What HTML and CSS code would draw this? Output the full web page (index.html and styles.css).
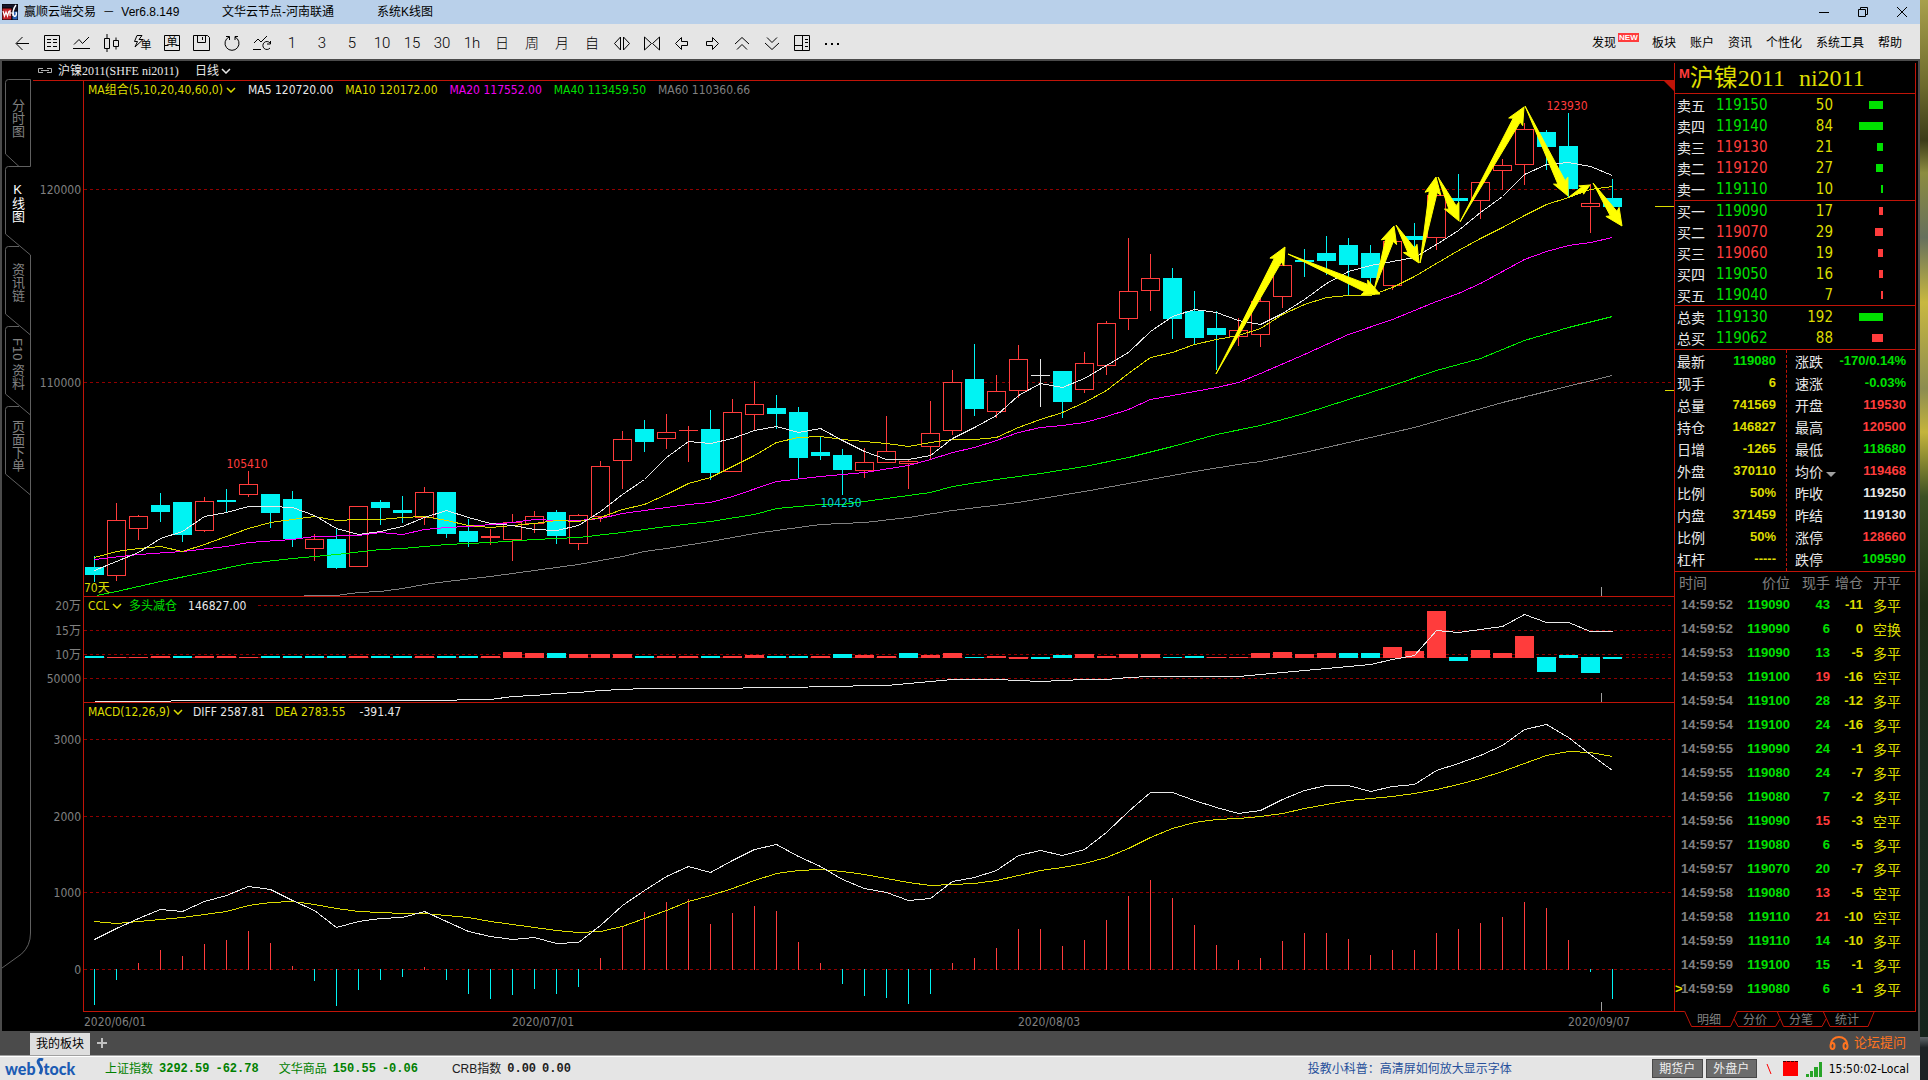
FILE: index.html
```html
<!DOCTYPE html>
<html lang="zh-CN">
<head>
<meta charset="utf-8">
<title>赢顺云端交易 - Ver6.8.149</title>
<link rel="stylesheet" href="styles.css">
</head>
<body>
<div class="window">
  <header class="titlebar">
    <svg class="app-icon" viewBox="0 0 16 16"><rect width="16" height="16" fill="#16162c"/><path d="M0 4h10v12H0z" fill="#c4242c"/><path d="M10 7h6v9h-6z" fill="#2a62b4"/><path d="M1 7l1.5 5L4 8l1.500 4L7 7M8 6v6M8 9h3v3" fill="none" stroke="#fff" stroke-width="1.2"/><path d="M14 1c-3 4-4 9-2 11 2 1 3-2 2-4" fill="none" stroke="#fff" stroke-width="1.400"/></svg>
    <span class="app-name">赢顺云端交易 &nbsp;－ &nbsp;Ver6.8.149</span>
    <span class="node-name">文华云节点-河南联通</span>
    <span class="view-name">系统K线图</span>
    <div class="win-controls">
      <button aria-label="最小化"><svg viewBox="0 0 12 12"><path d="M1 6.500H11"/></svg></button>
      <button aria-label="还原"><svg viewBox="0 0 12 12"><path d="M1.500 3.500h7v7h-7zM3.500 3V1.500h7v7H9"/></svg></button>
      <button aria-label="关闭"><svg viewBox="0 0 12 12"><path d="M1 1L11 11M11 1L1 11"/></svg></button>
    </div>
  </header>

  <div class="toolbar">
    <div class="tools">
      <button aria-label="返回"><svg viewBox="0 0 20 20"><path d="M4.500 10.500H17M10.500 4L4 10.500l6.500 6.500"/></svg></button>
      <button aria-label="报价"><svg viewBox="0 0 20 20"><path d="M2.500 2.500h15v15h-15zM5 6.500h4M11 6.500h4M5 9.500h4M11 9.500h4M5 13.500h4M11 13.500h4"/></svg></button>
      <button aria-label="分时"><svg viewBox="0 0 20 20"><path d="M1 15.500H18M2 11.500l5-5 3.500 4L17 4"/></svg></button>
      <button aria-label="K线"><svg viewBox="0 0 20 20"><path d="M2.500 5.500h5v10h-5zM5 1v4.500M5 15.500V19M11.500 7.500h5v6h-5zM14 4.500v3M14 13.500v3"/></svg></button>
      <button aria-label="闪电下单"><svg viewBox="0 0 20 20"><path d="M5 2.500h5l-3 4h4L3 14l2.500-5.500H2.500z"/></svg><span class="mark corner">单</span></button>
      <button aria-label="下单"><svg viewBox="0 0 20 20"><path d="M2.500 2.500h15v15h-15zM2.500 12.500h4M13.500 12.500h4"/></svg><span class="mark">单</span></button>
      <button aria-label="保存"><svg viewBox="0 0 20 20"><path d="M1.500 2.500h14l2 2v13h-16zM5.500 2.500v7h8v-7M10.500 4v3"/></svg></button>
      <button aria-label="刷新"><svg viewBox="0 0 20 20"><path d="M7 4A7 7 0 1 0 13 4M4 3.500h3.500V7M16 3.500h-3V7"/></svg></button>
      <button aria-label="切换"><svg viewBox="0 0 20 20"><path d="M2 10l4-4 3 3 6-6M1 16.500h8M18 10a4 4 0 1 0 0 5M18.500 8v3H15"/></svg></button>
      <button class="t">1</button><button class="t">3</button><button class="t">5</button><button class="t">10</button><button class="t">15</button><button class="t">30</button><button class="t">1h</button>
      <button class="c">日</button><button class="c">周</button><button class="c">月</button><button class="c">自</button>
      <button aria-label="放宽"><svg viewBox="0 0 20 20"><path d="M8.500 4L2.500 10.500l6 6.500zM11.500 4l6 6.500-6 6.500z"/></svg></button>
      <button aria-label="收窄"><svg viewBox="0 0 20 20"><path d="M2.500 4l7 6.500-7 6.500zM17.500 4l-7 6.500 7 6.500z"/></svg></button>
      <button aria-label="左移"><svg viewBox="0 0 20 20"><path d="M9.500 4.500L3.500 10.500l6 6v-4h6v-4h-6z"/></svg></button>
      <button aria-label="右移"><svg viewBox="0 0 20 20"><path d="M10.500 4.500l6 6-6 6v-4h-6v-4h6z"/></svg></button>
      <button aria-label="上"><svg viewBox="0 0 20 20"><path d="M3 11l7-6.500 7 6.500M5 16.500l5-5 5 5"/></svg></button>
      <button aria-label="下"><svg viewBox="0 0 20 20"><path d="M3 10l7 6.500 7-6.500M5 4.500l5 5 5-5"/></svg></button>
      <button aria-label="布局"><svg viewBox="0 0 20 20"><path d="M2.500 2.500h15v15h-15zM10.500 2.500v15M2.500 12.500h8M13 6.500h3M13 9.500h3M13 13.500h3"/></svg></button>
      <button aria-label="更多"><svg viewBox="0 0 20 20"><path d="M3 10h2v2H3zM9 10h2v2H9zM15 10h2v2h-2z" fill="#000" stroke="none"/></svg></button>
    </div>
    <nav class="menu">
      <a href="#" class="has-badge">发现<span class="badge">NEW</span></a><a href="#">板块</a><a href="#">账户</a><a href="#">资讯</a><a href="#">个性化</a><a href="#">系统工具</a><a href="#">帮助</a>
    </nav>
  </div>

  <main class="main">
    <nav class="side">
      <svg class="side-lines" viewBox="2 61 31 909"><path d="M30.500 79.500H8.500q-3 0-3 3V154L19 166.500M30.500 79.500V166.500H8.500q-3 0-3 3V234L30.500 255M19 246.500H8.500q-3 0-3 3V314L30.500 335M19 326.500H8.500q-3 0-3 3V394L30.500 415M19 406.500H8.500q-3 0-3 3V474L30.500 495M30.500 255V933q0 13-9 21L2 968"/></svg>
      <button class="first">分时图</button>
      <button class="on">K线图</button>
      <button>资讯链</button>
      <button class="mixed">F10 资料</button>
      <button class="last">页面下单</button>
    </nav>

    <section class="chart">
      <div class="chart-head">
        <svg class="chain" viewBox="0 0 16 8"><path d="M6 1.500H1.500v4H6M4 3.500h8M10 1.500h4.500v4H10"/></svg>
        <span class="serif">沪镍2011(SHFE ni2011)</span>
        <button class="period">日线<svg class="chev" viewBox="0 0 10 6"><path d="M1 1l4 4 4-4"/></svg></button>
      </div>
      <div class="pane price">
        <div class="axis" id="axis-price"></div>
        <div class="plot" id="plot-price">
          <svg class="canvas" id="price" viewBox="84 81 1590 515" preserveAspectRatio="none"></svg>
          <div class="legend"><button class="y">MA组合(5,10,20,40,60,0)<svg class="chev" viewBox="0 0 10 6"><path d="M1 1l4 4 4-4"/></svg></button><span class="w">MA5 120720.00</span><span class="y">MA10 120172.00</span><span class="m">MA20 117552.00</span><span class="g">MA40 113459.50</span><span class="n">MA60 110360.66</span></div>
          <span class="days">70天</span>
        </div>
      </div>
      <div class="pane ccl">
        <div class="axis" id="axis-ccl"></div>
        <div class="plot">
          <svg class="canvas" id="ccl" viewBox="84 597 1590 105" preserveAspectRatio="none"></svg>
          <div class="legend"><button class="y">CCL<svg class="chev" viewBox="0 0 10 6"><path d="M1 1l4 4 4-4"/></svg></button><span class="g">多头减仓</span><span class="w far">146827.00</span></div>
        </div>
      </div>
      <div class="pane macd">
        <div class="axis" id="axis-macd"></div>
        <div class="plot">
          <svg class="canvas" id="macd" viewBox="84 703 1590 308" preserveAspectRatio="none"></svg>
          <div class="legend"><button class="y">MACD(12,26,9)<svg class="chev" viewBox="0 0 10 6"><path d="M1 1l4 4 4-4"/></svg></button><span class="w">DIFF 2587.81</span><span class="y">DEA 2783.55</span><span class="w far">-391.47</span></div>
        </div>
      </div>
      <div class="dates" id="dates"></div>
    </section>

    <aside class="quote">
      <div class="quote-box">
        <h1 class="symbol"><sup>M</sup><span>沪镍2011</span><span>ni2011</span></h1>
        <table class="book sell" id="sell"></table>
        <table class="book buy" id="buy"></table>
        <table class="book total" id="total"></table>
        <div class="stats">
          <dl>
            <div><dt>最新</dt><dd class="g">119080</dd></div>
            <div><dt>现手</dt><dd class="y">6</dd></div>
            <div><dt>总量</dt><dd class="y">741569</dd></div>
            <div><dt>持仓</dt><dd class="y">146827</dd></div>
            <div><dt>日增</dt><dd class="y">-1265</dd></div>
            <div><dt>外盘</dt><dd class="y">370110</dd></div>
            <div><dt>比例</dt><dd class="y">50%</dd></div>
            <div><dt>内盘</dt><dd class="y">371459</dd></div>
            <div><dt>比例</dt><dd class="y">50%</dd></div>
            <div><dt>杠杆</dt><dd class="y">-----</dd></div>
          </dl>
          <dl>
            <div><dt>涨跌</dt><dd class="g">-170/0.14%</dd></div>
            <div><dt>速涨</dt><dd class="g">-0.03%</dd></div>
            <div><dt>开盘</dt><dd class="r">119530</dd></div>
            <div><dt>最高</dt><dd class="r">120500</dd></div>
            <div><dt>最低</dt><dd class="g">118680</dd></div>
            <div><dt class="drop">均价</dt><dd class="r">119468</dd></div>
            <div><dt>昨收</dt><dd class="w">119250</dd></div>
            <div><dt>昨结</dt><dd class="w">119130</dd></div>
            <div><dt>涨停</dt><dd class="r">128660</dd></div>
            <div><dt>跌停</dt><dd class="g">109590</dd></div>
          </dl>
        </div>
        <table class="ticks">
          <thead><tr><th>时间</th><th>价位</th><th>现手</th><th>增仓</th><th>开平</th></tr></thead>
          <tbody id="ticks"></tbody>
        </table>
      </div>
      <nav class="quote-tabs">
        <svg viewBox="0 0 242 19"><path d="M10 0h54v2H10z" fill="#000" stroke="none"/><path d="M10.500 0L17.500 15.500H56.500L63.500 0M60 8l4 7.500H101.500L106 8M103 0l6.500 15.500H148L152 8M149 0l7 15.500H194L200.500 0"/></svg>
        <button>明细</button><button>分价</button><button>分笔</button><button>统计</button>
      </nav>
    </aside>
  </main>

  <div class="boards">
    <button class="board">我的板块</button>
    <button class="add" aria-label="新增"><svg viewBox="0 0 10 10"><path d="M5 0v10M0 5h10"/></svg></button>
    <a href="#" class="forum"><svg viewBox="0 0 20 14"><path d="M2 9V8a8 7 0 0 1 16 0v1"/><ellipse cx="3.500" cy="10" rx="2" ry="3"/><ellipse cx="16.500" cy="10" rx="2" ry="3"/></svg>论坛提问</a>
  </div>

  <footer class="status">
    <span class="logo">web<svg viewBox="0 0 8 18"><path d="M7 2C3 0 1 3 3 6s4 5 1 10"/></svg>tock</span>
    <div class="indices">
      <span class="idx up"><span>上证指数</span><b>3292.59</b><b>-62.78</b></span>
      <span class="idx up"><span>文华商品</span><b>150.55</b><b>-0.06</b></span>
      <span class="idx crb"><span>CRB指数</span><b>0.00</b><b>0.00</b></span>
    </div>
    <a href="#" class="notice">投教小科普：高清屏如何放大显示字体</a>
    <div class="accounts">
      <button>期货户</button><button>外盘户</button>
      <svg class="slash" viewBox="0 0 6 12"><path d="M1 1l4 10"/></svg>
      <span class="block"></span>
      <svg class="signal" viewBox="0 0 16 16"><path d="M0 13h3v3H0zM4 10h3v6H4zM8 6h4v10H8zM13 1h3v15h-3z"/></svg>
      <span class="clock">15:50:02-Local</span>
    </div>
  </footer>
</div>
<script src="chart.js"></script>
</body>
</html>
```
FILE: styles.css
```css
* { box-sizing: border-box; }
:root {
  --red: #ff3c3c;
  --cyan: #00f3f3;
  --line: #c01408;
  --tahoma: "DejaVu Sans Condensed", "DejaVu Sans", "Noto Sans CJK SC", sans-serif;
  --figures: "Liberation Sans", "Noto Sans CJK SC", sans-serif;
}
html, body { margin: 0; height: 100%; }
body {
  font: 12px/16px "Liberation Sans", "Noto Sans CJK SC", sans-serif;
  color: #000;
  padding-right: 8px;
  background: linear-gradient(#a8a04c 0, #6c6a2c 8%, #3c3c18 13%, #8c8c40 16%, #66705c 22%, #c8b840 28%, #8c8c50 36%, #c4b43c 40%, #3c5024 46%, #1c2a12 56%, #18281c 70%, #14241c 96%, #60686c 96%, #1d2326 97%);
}
button { font: inherit; color: inherit; background: none; border: 0; padding: 0; margin: 0; }
a { color: inherit; text-decoration: none; }
table { border-collapse: collapse; border-spacing: 0; }
svg { display: block; fill: none; stroke: currentColor; flex: none; }

.y { color: #dcdc00; }
.w { color: #e8e8e8; }
.m { color: #f000f0; }
.g { color: #00e000; }
.n { color: #808080; }
.r { color: var(--red); }

.window { display: flex; flex-direction: column; height: 100vh; }

.titlebar { display: flex; align-items: center; height: 24px; background: #b9d0ea; padding-left: 2px; flex: none; }
.app-icon { width: 16px; height: 16px; margin-right: 6px; }
.app-name { width: 198px; }
.node-name { width: 155px; }
.win-controls { margin-left: auto; display: flex; gap: 3px; }
.win-controls button { width: 36px; height: 24px; display: grid; place-items: center; }
.win-controls svg { width: 12px; height: 12px; }

.toolbar { display: flex; justify-content: space-between; align-items: center; height: 37px; background: #e5e5e5; border-bottom: 2px solid #4b4b4b; padding: 2px 18px 0 7px; flex: none; }
.tools { display: flex; }
.tools button { width: 30px; height: 30px; display: grid; place-items: center; position: relative; }
.tools svg { width: 20px; height: 20px; }
.tools .t { font: 300 15px/20px Roboto, sans-serif; }
.tools .c { font-size: 14px; line-height: 20px; font-weight: 300; }
.mark { position: absolute; inset: 0; display: grid; place-items: center; font-size: 11px; line-height: 11px; }
.mark.corner { padding: 6px 0 0 8px; }
.menu { display: flex; gap: 14px; }
.has-badge { position: relative; margin-right: 22px; }
.badge { position: absolute; left: 26px; top: -2px; width: 21px; height: 9px; background: var(--red); color: #fff; font: bold 8px/9px "Liberation Sans", sans-serif; text-align: center; }

.main { flex: 1; min-height: 0; display: flex; background: #000; border: solid #4b4b4b; border-width: 0 2px; padding-right: 2px; color: #e8e8e8; }
.side { width: 31px; position: relative; padding-top: 18px; flex: none; }
.side-lines { position: absolute; left: 0; top: 0; width: 31px; height: 909px; color: #606060; }
.side button { position: relative; display: block; width: 31px; height: 80px; padding-bottom: 8px; color: #808080; font-size: 13px; line-height: 31px; writing-mode: vertical-rl; text-orientation: upright; text-align: center; }
.side .first { height: 87px; padding-bottom: 8px; }
.side .on { color: #fff; }
.side .mixed { text-orientation: mixed; padding-bottom: 4px; }
.side .last { padding-bottom: 0; }

.chart { flex: 1; min-width: 0; display: flex; flex-direction: column; }
.chart-head { height: 19px; display: flex; align-items: center; padding-left: 4px; flex: none; }
.chain { width: 16px; height: 8px; margin-right: 5px; color: #b0b0b0; }
.serif { font-family: "Liberation Serif", "Noto Sans CJK SC", serif; width: 137px; }
.period { display: flex; align-items: center; gap: 2px; }
.chev { width: 10px; height: 6px; stroke-width: 1.5; }
.pane { display: flex; min-height: 0; font: 12px/16px var(--tahoma); }
.price { flex: 516 1 0; }
.ccl { flex: 106 1 0; }
.macd { flex: 310 1 0; }
.axis { width: 50px; position: relative; color: #808080; flex: none; }
.axis span { position: absolute; right: 2px; margin-top: -7px; }
.plot { flex: 1; min-width: 0; position: relative; border: solid var(--line); border-width: 1px 0 0 1px; }
.price .axis { border-top: 1px solid var(--line); }
.macd .plot { border-bottom-width: 1px; }
.canvas { width: 100%; height: 100%; }
.legend { position: absolute; left: 0; top: 0; display: flex; align-items: center; gap: 12px; height: 18px; padding: 0 9px 0 4px; background: #000; white-space: nowrap; }
.ccl .legend { gap: 7px; }
.macd .legend { gap: 10px; }
.legend button { display: flex; align-items: center; gap: 3px; }
.far { margin-left: 4px; }
.days { position: absolute; left: 0; bottom: 0; color: #dcdc00; }
.peak { position: absolute; width: 60px; margin: -7px 0 0 -30px; text-align: center; }
.low { color: #00d0d8; }
.dates { height: 19px; position: relative; margin-left: 51px; font: 12px/18px var(--tahoma); color: #808080; flex: none; }
.dates span { position: absolute; top: 1px; }

.quote { width: 242px; display: flex; flex-direction: column; padding-top: 2px; flex: none; }
.quote-box { flex: 1; min-height: 0; border: solid var(--line); border-width: 0 1px 1px; }
.symbol { margin: 0; height: 31px; border-bottom: 1px solid var(--line); padding-left: 4px; display: flex; align-items: center; font: 24px/30px "Liberation Serif", "Noto Sans CJK SC", serif; color: #dcdc00; }
.symbol sup { font: bold 13px/13px var(--figures); color: var(--red); align-self: flex-start; margin-top: 4px; }
.symbol span + span { margin-left: 14px; }
.book { width: 100%; table-layout: fixed; border-bottom: 1px solid var(--line); font: 15px/20px var(--tahoma); }
.book td, .book th { padding: 0; }
.book th { width: 41px; padding-left: 2px; text-align: left; font: 14px/20px "Noto Sans CJK SC", sans-serif; color: #e8e8e8; }
.book td:nth-child(2) { width: 56px; }
.book td:nth-child(3) { width: 61px; text-align: right; color: #dcdc00; }
.book td:nth-child(4) { padding-right: 32px; }
.bar { display: block; height: 8px; margin-left: auto; }
.sell { height: 107px; }
.buy { height: 105px; }
.total { height: 44px; }
.stats { display: flex; height: 222px; border-bottom: 1px solid var(--line); }
.stats dl { margin: 0; flex: 1; padding: 0 10px 0 2px; }
.stats dl + dl { border-left: 1px dashed var(--line); padding: 0 9px 0 8px; flex: none; width: 129px; }
.stats dl div { display: flex; justify-content: space-between; height: 22px; }
.stats dt { font: 14px/22px "Noto Sans CJK SC", sans-serif; color: #e8e8e8; }
.drop::after { content: ""; display: inline-block; margin-left: 3px; border: 5px solid transparent; border-top-color: #a0a0a0; border-bottom: 0; }
.stats dd { margin: 0; font: bold 13px/22px var(--figures); }
.ticks { width: 100%; table-layout: fixed; font: bold 13px/24px var(--figures); }
.ticks th, .ticks td { padding: 0; height: 24px; text-align: right; }
.ticks th { height: 21px; font: 14px/21px "Noto Sans CJK SC", sans-serif; color: #808080; }
.ticks th:nth-child(1) { width: 64px; padding-left: 4px; }
.ticks th:nth-child(2) { width: 51px; }
.ticks th:nth-child(3) { width: 40px; }
.ticks th:nth-child(4) { width: 33px; }
.ticks tr > :first-child { text-align: left; color: #808080; }
.ticks td:first-child { padding-left: 6px; position: relative; }
.ticks tr > :last-child { text-align: left; padding-left: 10px; }
.ticks td:last-child { font: 14px/24px "Noto Sans CJK SC", sans-serif; color: #dcdc00; }
.ticks tr:last-child td:first-child::before { content: ">"; position: absolute; left: 0; color: #dcdc00; }
.quote-tabs { height: 20px; margin-top: -1px; position: relative; display: flex; padding-left: 12px; color: #808080; }
.quote-tabs svg { position: absolute; left: 0; top: 0; width: 242px; height: 19px; color: var(--line); }
.quote-tabs button { position: relative; width: 46px; height: 17px; }

.boards { display: flex; align-items: center; height: 24px; background: #4b4b4b; padding-left: 30px; flex: none; }
.board { width: 60px; height: 22px; margin-top: 2px; background: #dedede; }
.add { margin-left: 7px; color: #c0c0c0; }
.add svg { width: 10px; height: 10px; stroke-width: 2; }
.forum { margin-left: auto; padding-right: 14px; display: flex; align-items: center; gap: 5px; color: #ff7420; font-size: 13px; }
.forum svg { width: 20px; height: 14px; stroke-width: 2; }

.status { display: flex; align-items: center; height: 25px; background: #e5e5e5; border-top: 1px solid #a0a0a0; box-shadow: inset 0 1px #fff; padding: 1px 11px 0 5px; flex: none; }
.logo { display: flex; align-items: center; width: 100px; font: 900 16px/20px Lato, sans-serif; color: #1c5cb4; }
.logo svg { width: 8px; height: 18px; stroke-width: 3; margin-top: -4px; }
.indices { display: flex; gap: 20px; flex: 1; }
.idx { display: flex; gap: 6px; white-space: nowrap; }
.idx b { font: bold 12px/16px "Liberation Mono", monospace; }
.up { color: #008000; }
.crb { margin-left: 14px; color: #202020; }
.notice { color: #27509b; margin-right: 140px; white-space: nowrap; }
.accounts { display: flex; align-items: center; }
.accounts button { width: 51px; height: 19px; margin-right: 3px; background: #6c6c6c; border: 1px solid #484848; color: #f0f0f0; }
.slash { width: 6px; height: 12px; margin: 0 11px 0 6px; color: #f00; }
.block { width: 15px; height: 15px; background: #f00; border-top: 1px dashed #400; margin-right: 8px; }
.signal { width: 16px; height: 16px; fill: #28a428; stroke: none; margin-right: 7px; }
.clock { font: 12px/16px var(--tahoma); }
```
FILE: chart.js
```js
const RED = '#ff3c3c', CYAN = '#00f3f3', WHITE = '#e8e8e8', YELLOW = '#dcdc00';
const X0 = 94, STEP = 22;
const px = i => X0 + STEP * i;

// kind, high, body top, body bottom, low
const candles = `c 556 567 575 582|r 503 520 575 580|r 515 516 528 539|c 493 505 512 522|c 502 502 535 542|r 497 501 530 531|c 489 500 502 513|r 471 484 494 496|c 494 494 513 528|c 491 499 539 547|r 534 539 548 560|c 528 539 568 569|r 506 506 566 566|c 500 502 508 525|c 496 510 513 523|r 487 492 517 524|c 492 492 534 538|c 519 531 542 547|r 529 536 537 544|r 514 522 539 560|r 511 516 523 532|c 510 512 536 544|r 514 515 543 549|r 461 466 516 521|r 431 439 460 488|c 420 429 442 452|r 414 432 438 448|r 426 430 430 461|c 410 429 473 480|r 399 412 471 471|r 381 404 414 429|c 395 408 414 429|c 407 412 458 478|c 436 452 456 460|c 449 455 470 495|r 448 462 470 477|r 416 451 462 462|r 459 461 463 488|r 401 433 446 458|r 370 382 430 434|c 344 379 409 416|r 375 391 411 417|r 345 359 390 397|w 359 375 375 406|c 371 371 402 418|r 352 363 389 392|r 321 323 365 374|r 238 291 318 329|r 254 278 290 310|c 268 278 319 339|c 291 311 338 345|c 311 328 335 370|r 318 330 336 345|r 297 301 334 346|r 263 265 296 307|c 249 260 262 277|c 236 253 261 275|c 238 245 265 295|c 245 253 278 287|r 237 241 285 289|c 223 236 240 250|r 195 195 237 249|c 174 198 201 213|r 182 182 200 218|r 159 165 170 189|r 123 129 164 184|c 130 132 147 170|c 113 146 189 197|r 184 203 206 232|c 179 198 207 208`
  .split('|').map(s => { const [k, ...v] = s.split(' '); return [k, ...v.map(Number)]; });

const nums = s => s.trim().split(/\s+/).map((v, i) => [px(i), +v]);
const pairs = s => s.trim().split(/\s+/).map(p => { const [i, y] = p.split(':').map(Number); return [px(i), y]; });

const ma5 = nums('570 561 552 538 531 516 512 506 506 507 515 528 534 531 526 517 510 517 523 525 529 530 525 511 494 479 457 441 443 438 430 426 432 428 440 451 459 459 455 438 427 415 395 383 387 378 365 352 331 316 309 312 320 324 313 299 283 271 265 261 257 244 230 212 196 174 164 162 166 175');
const ma10 = nums('557 551 548 546 551 544 536 528 522 519 516 520 519 519 517 516 520 525 527 525 523 520 521 517 509 504 494 483 477 466 455 442 437 436 439 441 443 446 442 439 439 437 427 419 412 402 390 373 357 352 344 339 335 328 314 304 297 295 295 287 276 263 250 238 227 215 204 197 189 186');
const ma20 = pairs('0:559 2:554 4:551 6:546 7:542 9:539 10:536 12:535 13:532 14:534 15:529 16:527 17:526 18:524 19:522 20:519 21:520 22:520 23:518 24:513 25:510 27:504 28:502 29:496 31:481 33:476 35:472 37:465 38:459 39:452 40:447 41:440 42:432 43:427 44:425 45:422 46:416 47:409 48:399 50:391 51:387 52:382 53:373 55:354 57:334 59:319 61:301 62:293 63:283 65:259 66:251 67:245 68:242 69:237');
const ma40 = pairs('0.1:595 1:591 3:581 5:572 7:563 9:558 11:554 13:549 14:548 16:544 18:542 20:539 22:537 24:532 26:526 28:521 30:514 31:508 33:504 34:504 36:498 38:492 39:486 41:479 43:473 45:466 47:457 49:446 51:434 53:425 55:413 57:399 59:385 61:370 63:358 65:340 67:327 69:316');
const ma60 = pairs('9.5:595 11:595 12:592 13:591 14:588 15:584 16:581 18:576 20:570 22:564 24:556 25:551 26:548 28:541 30:533 32:527 33:524 35:522 37:517 39:510 42:502 45:491 48:479 50:471 52:464 53:461 55:452 57:442 60:427 64:402 66:391 69:375');
const diff = nums('939 928 918 909 911 901 895 886 889 900 910 927 921 918 917 911 921 931 936 939 937 943 942 925 905 890 876 866 872 860 849 844 856 866 879 888 892 900 898 881 877 870 855 850 855 849 832 811 792 792 800 807 813 810 799 790 785 785 791 786 784 770 763 755 745 729 724 737 754 770');
const dea = nums('921 923 921 919 917 914 911 905 902 901 904 908 911 912 913 913 915 917 921 924 927 930 932 931 926 918 910 901 895 888 880 873 870 869 871 874 878 882 885 884 883 880 875 870 867 863 857 848 837 828 822 819 818 816 813 808 804 800 798 796 793 789 784 778 771 763 755 751 752 756');
const hist = '1005 980 963 950 956 944 940 931 943 966 981 1006 990 980 977 967 980 994 999 995 989 994 987 958 927 912 902 899 924 913 906 911 942 963 984 996 998 1004 994 963 958 948 929 929 946 940 920 896 880 898 925 945 960 958 941 933 933 939 955 950 950 933 929 923 917 902 908 940 972 999'.split(' ').map(Number);
const openInterest = pairs('0:701 3:701 4:700 16:700 17:699 18:699 19:696 20:695 21:693 22:692 23:690 24:689 25:688 28:688 31:687 34:686 35:685 36:685 37:683 38:681 39:679 41:679 43:681 45:679 46:679 47:677 48:676 52:676 53:674 54:672 55:670 56:668 57:666 58:664 59:659 60:655 61:630 62:632 63:629 64:626 65:614 66:622 67:622 68:631 69:631');
const flows = 'c2 r1 r1 r2 c2 r2 r2 r1 c2 c2 c2 c2 r2 c2 c2 r2 c2 c2 r2 r6 r5 c5 r4 r4 r4 c2 r2 r2 c2 r2 r3 c2 c2 r2 c4 r3 r2 c5 r3 r5 c1 r2 r-2 c-2 c3 r4 r2 r4 r4 c1 c2 r1 r1 r5 r6 r4 r5 c5 c5 r11 r7 r47 c-4 r8 r5 r22 c-15 c3 c-16 c-2'.split(' ');

const rect = (x, y, w, h, fill) => `<rect x="${x}" y="${y}" width="${w}" height="${h}" fill="${fill}" stroke="none"/>`;
const grid = ys => ys.map(y => `<path d="M84 ${y + .5}H1674" stroke="#900000" stroke-dasharray="3 3"/>`).join('');
const line = (pts, color) => `<polyline points="${pts.map(([x, y]) => `${x + .5},${y + .5}`).join(' ')}" stroke="${color}"/>`;
const crisp = body => `<g shape-rendering="crispEdges">${body}</g>`;
const tick = y => rect(1601, y, 1, 9, '#a0a0a0');

function candle([kind, high, top, bottom, low], i) {
  const x = px(i);
  if (kind === 'c') return rect(x, high, 1, low - high, CYAN) + rect(x - 9, top, 19, bottom - top, CYAN);
  const color = kind === 'w' ? WHITE : RED;
  return rect(x, high, 1, low - high + 1, color) +
    (top === bottom ? rect(x - 9, top, 19, 1, color)
      : `<rect x="${x - 8.5}" y="${top + .5}" width="18" height="${bottom - top}" fill="#000" stroke="${color}"/>`);
}

function arrow([x1, y1, x2, y2, size]) {
  const len = Math.hypot(x2 - x1, y2 - y1), ux = (x2 - x1) / len, uy = (y2 - y1) / len;
  const at = (back, side) => `${(x2 - ux * back - uy * side).toFixed(1)},${(y2 - uy * back + ux * side).toFixed(1)}`;
  const h = 17 * size, w = 8 * size, s = 4 * size;
  return `<polygon points="${x1},${y1} ${at(h - 2, s)} ${at(h, w)} ${x2},${y2} ${at(h, -w)} ${at(h - 2, -s)}" fill="#ff0" stroke="#ff0"/>`;
}
const arrows = [[1216, 374, 1285, 247, 1], [1288, 254, 1380, 294, 1], [1374, 290, 1394, 226, 1], [1396, 225, 1419, 263, 1], [1420, 263, 1436, 177, 1], [1438, 177, 1459, 221, 1], [1460, 222, 1524, 107, 1], [1525, 106, 1568, 196, 1], [1569, 197, 1590, 185, .6], [1593, 183, 1622, 226, 1]];

document.getElementById('price').innerHTML = crisp(
  grid([189, 382]) + candles.map(candle).join('') +
  line(ma60, '#808080') + line(ma40, '#00f000') + line(ma20, '#ff00ff') + line(ma10, YELLOW) + line(ma5, WHITE) +
  rect(1655, 206, 19, 1, YELLOW) + rect(1665, 390, 9, 1, YELLOW) + tick(587)
) + arrows.map(arrow).join('') + '<path d="M1664 81h10v10z" fill="#c01408" stroke="none"/>';

document.getElementById('ccl').innerHTML = crisp(
  grid([605, 630, 654, 657, 678]) + flows.map((f, i) => {
    const v = +f.slice(1), color = f[0] === 'c' ? CYAN : RED;
    return v > 0 ? rect(px(i) - 9, 658 - v, 19, v, color) : rect(px(i) - 9, 657, 19, -v, color);
  }).join('') + line(openInterest, WHITE) + tick(693));

document.getElementById('macd').innerHTML = crisp(
  grid([739, 816, 892, 969]) +
  hist.map((y, i) => y < 969 ? rect(px(i), y, 1, 970 - y, RED) : rect(px(i), 969, 1, y - 969, CYAN)).join('') +
  line(dea, YELLOW) + line(diff, WHITE) + tick(1002));

const place = (id, top, height, labels) => {
  document.getElementById(id).innerHTML = labels.map(([t, y]) => `<span style="top:${(y - top) / height * 100}%">${t}</span>`).join('');
};
place('axis-price', 81, 515, [['120000', 189], ['110000', 382]]);
place('axis-ccl', 596, 106, [['20万', 605], ['15万', 630], ['10万', 654], ['50000', 678]]);
place('axis-macd', 702, 310, [['3000', 739], ['2000', 816], ['1000', 892], ['0', 969]]);

document.getElementById('plot-price').insertAdjacentHTML('beforeend',
  [['105410', 247, 463, 'r'], ['104250', 841, 502, 'low'], ['123930', 1567, 105, 'r']].map(([t, x, y, c]) =>
    `<span class="peak ${c}" style="left:${(x - 84) / 15.9}%;top:${(y - 81) / 5.15}%">${t}</span>`).join(''));
document.getElementById('dates').innerHTML =
  [['2020/06/01', 84], ['2020/07/01', 512], ['2020/08/03', 1018], ['2020/09/07', 1568]].map(([t, x]) => `<span style="left:${(x - 84) / 15.9}%">${t}</span>`).join('');

const book = (id, color, rows) => {
  document.getElementById(id).innerHTML = '<tbody>' + rows.map(([n, p, c, q, w]) =>
    `<tr><th scope="row">${n}</th><td class="${c}">${p}</td><td>${q}</td><td><i class="bar" style="width:${w}px;background:${color}"></i></td></tr>`).join('') + '</tbody>';
};
book('sell', '#00e000', [['卖五', 119150, 'g', 50, 14], ['卖四', 119140, 'g', 84, 24], ['卖三', 119130, 'r', 21, 6], ['卖二', 119120, 'r', 27, 7], ['卖一', 119110, 'g', 10, 2]]);
book('buy', RED, [['买一', 119090, 'g', 17, 4], ['买二', 119070, 'r', 29, 8], ['买三', 119060, 'r', 19, 5], ['买四', 119050, 'g', 16, 4], ['买五', 119040, 'g', 7, 2]]);
book('total', '#00e000', [['总卖', 119130, 'g', 192, 24], ['总买', 119062, 'g', 88, 11]]);
document.querySelector('#total tr:last-child .bar').style.background = RED;

document.getElementById('ticks').innerHTML = `52 119090 43 -11 多平|52 119090 6 0 空换|53 119090 13 -5 多平|53 119100 19r -16 空平|54 119100 28 -12 多平|54 119100 24 -16 多平|55 119090 24 -1 多平|55 119080 24 -7 多平|56 119080 7 -2 多平|56 119090 15r -3 空平|57 119080 6 -5 多平|57 119070 20 -7 多平|58 119080 13r -5 空平|58 119110 21r -10 空平|59 119110 14 -10 多平|59 119100 15 -1 多平|59 119080 6 -1 多平`
  .split('|').map(s => s.split(' ')).map(([t, p, q, d, k]) =>
    `<tr><td>14:59:${t}</td><td class="g">${p}</td><td class="${q.endsWith('r') ? 'r' : 'g'}">${parseInt(q)}</td><td class="y">${d}</td><td>${k}</td></tr>`).join('');
```
